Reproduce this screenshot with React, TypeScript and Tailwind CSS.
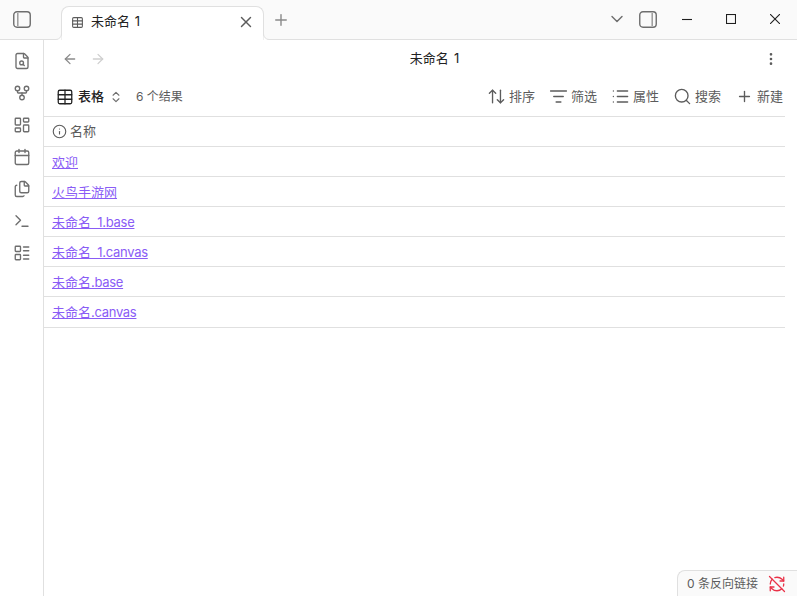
import React from "react";
import { Table, X, Plus, ChevronDown, ArrowLeft, ArrowRight, MoreVertical, ChevronsUpDown, ArrowUpDown, ListFilter, List, Search, Info, GitFork, LayoutDashboard, Calendar, Files, Terminal, FileSearch, LayoutList, RefreshCwOff } from "lucide-react";

const rows: [string, string][] = [
  ["欢迎", ""],
  ["火鸟手游网", ""],
  ["未命名", " 1.base"],
  ["未命名", " 1.canvas"],
  ["未命名", ".base"],
  ["未命名", ".canvas"],
];

const Panel = ({ right }: { right?: boolean }) => (
  <svg width="18" height="17" viewBox="0 0 18 17" fill="none">
    <rect x="0.75" y="0.75" width="16.5" height="15.5" rx="3.2" stroke="#6e6e6e" strokeWidth="1.4" />
    <path d={right ? "M13.2 2v13" : "M4.800 2v13"} stroke="#9a9a9a" strokeWidth="1.500" />
  </svg>
);

const WinMin = () => (
  <svg width="10" height="10" viewBox="0 0 10 10" stroke="#1f1f1f" strokeWidth="1.100" fill="none"><path d="M0 5.500h10" /></svg>
);
const WinMax = () => (
  <svg width="10" height="10" viewBox="0 0 10 10" stroke="#1f1f1f" strokeWidth="1.100" fill="none"><rect x="0.500" y="0.500" width="9" height="9" /></svg>
);
const WinClose = () => (
  <svg width="10" height="10" viewBox="0 0 10 10" stroke="#1f1f1f" strokeWidth="1.100" fill="none"><path d="M0 0l10 10M10 0L0 10" /></svg>
);

const Tool = ({ icon, label, className }: { icon: React.ReactNode; label: string; className: string }) => (
  <div className={`flex items-center ${className}`}>
    {icon}
    <span>{label}</span>
  </div>
);

const SideIcon = ({ children }: { children: React.ReactNode }) => (
  <div className="h-8 flex items-center justify-center text-[#6e6e6e]">{children}</div>
);

export default function App() {
  return (
    <div className="w-[797px] h-[596px] flex flex-col overflow-hidden bg-white text-[13px] font-['Inter','Noto_Sans_CJK_SC',sans-serif] relative">
      {/* title bar */}
      <div className="h-10 shrink-0 flex bg-[#fafafa] border-b border-[#e0e0e0]">
        <div className="w-[44px] flex items-center justify-center pb-[1px]"><Panel /></div>
        <div className="ml-[17px] mt-[6px] w-[203px] h-[34px] relative z-10 flex items-center bg-white border border-b-0 border-[#e0e0e0] rounded-t-[8px] pl-[9px] pr-[8px] pb-[3px]">
          <svg className="absolute left-[-6px] bottom-0" width="6" height="6" viewBox="0 0 6 6"><path d="M0 5.500C3 5.500 5.500 3 5.500 0V6H0Z" fill="#ffffff" /><path d="M0 5.500C3 5.500 5.500 3 5.500 0" fill="none" stroke="#e0e0e0" /></svg>
          <svg className="absolute right-[-6px] bottom-0" width="6" height="6" viewBox="0 0 6 6"><path d="M6 5.500C3 5.500 .5 3 .5 0V6H6Z" fill="#ffffff" /><path d="M6 5.500C3 5.500 .5 3 .5 0" fill="none" stroke="#e0e0e0" /></svg>
          <Table size={13} strokeWidth={2} className="text-[#5c5c5c]" />
          <span className="ml-[7px] text-[#222] flex-1 [word-spacing:1px]">未命名 1</span>
          <X size={18} strokeWidth={1.9} className="text-[#5c5c5c]" />
        </div>
        <div className="ml-[8px] flex items-center"><Plus size={18} strokeWidth={1.9} className="text-[#8a8a8a]" /></div>
        <div className="flex-1" />
        <div className="flex items-center pb-[1px] mr-[12px]"><ChevronDown size={20} strokeWidth={1.7} className="text-[#6e6e6e]" /></div>
        <div className="flex items-center pb-[1px]"><Panel right /></div>
        <div className="w-[44px] ml-[8px] flex items-center justify-center pb-[1px]"><WinMin /></div>
        <div className="w-[44px] flex items-center justify-center pb-[1px]"><WinMax /></div>
        <div className="w-[44px] flex items-center justify-center pb-[1px]"><WinClose /></div>
      </div>
      <div className="flex-1 flex min-h-0">
        {/* left ribbon */}
        <div className="w-[44px] shrink-0 border-r border-[#e0e0e0] flex flex-col pt-[5px]">
          <SideIcon><FileSearch size={18} strokeWidth={1.8} /></SideIcon>
          <SideIcon><GitFork size={18} strokeWidth={1.8} /></SideIcon>
          <SideIcon><LayoutDashboard size={18} strokeWidth={1.8} /></SideIcon>
          <SideIcon><Calendar size={18} strokeWidth={1.8} /></SideIcon>
          <SideIcon><Files size={18} strokeWidth={1.8} /></SideIcon>
          <SideIcon><Terminal size={18} strokeWidth={1.8} /></SideIcon>
          <SideIcon><LayoutList size={18} strokeWidth={1.8} /></SideIcon>
        </div>
        {/* main */}
        <div className="flex-1 min-w-0 flex flex-col">
          <div className="h-[37px] shrink-0 flex items-center pl-[18px] pr-[18px]">
            <ArrowLeft size={16} strokeWidth={1.9} className="text-[#8a8a8a]" />
            <ArrowRight size={16} strokeWidth={1.9} className="ml-[12px] text-[#cfcfcf]" />
            <div className="flex-1 text-center text-[#222] [word-spacing:1.5px]">未命名 1</div>
            <MoreVertical size={16} strokeWidth={2} className="text-[#5c5c5c]" />
          </div>
          <div className="h-[39px] shrink-0 flex items-center pl-[12px] mr-[12px] text-[#5c5c5c]">
            <Table size={18} strokeWidth={1.7} className="text-[#222]" />
            <span className="ml-[4px] text-[#222] font-medium">表格</span>
            <ChevronsUpDown size={14} strokeWidth={1.9} className="ml-[5px] text-[#6e6e6e]" />
            <span className="ml-[13px] text-[12px]">6 个结果</span>
            <div className="flex-1" />
            <Tool className="mr-[14px] gap-[3px]" label="排序" icon={<ArrowUpDown size={19} strokeWidth={1.7} />} />
            <Tool className="mr-[14px] gap-[3px]" label="筛选" icon={<ListFilter size={19} strokeWidth={1.7} />} />
            <Tool className="mr-[14px] gap-[3px]" label="属性" icon={<List size={19} strokeWidth={1.7} />} />
            <Tool className="mr-[15px] gap-[3px]" label="搜索" icon={<Search size={19} strokeWidth={1.7} />} />
            <Tool className="mr-[2px] gap-[4px]" label="新建" icon={<Plus size={17} strokeWidth={1.9} />} />
          </div>
          <div className="mr-[12px] border-t border-[#e0e0e0]">
            <div className="h-[30px] border-b border-[#e0e0e0] flex items-center pl-[8px] text-[#5c5c5c]">
              <Info size={15} strokeWidth={1.8} />
              <span className="ml-[3px]">名称</span>
            </div>
            {rows.map(([c, l]) => (
              <div key={c + l} className="h-[30px] last:h-[31px] border-b border-[#e0e0e0] flex items-center pl-[8px] pt-[2px] last:pt-[1px]">
                <a className="text-[#8a5cf6] underline [word-spacing:3px]">{c}<span className="tracking-[-0.3px]">{l}</span></a>
              </div>
            ))}
          </div>
        </div>
      </div>
      {/* status bar */}
      <div className="absolute right-0 bottom-0 w-[120px] h-[26px] bg-[#fafafa] border-t border-l border-[#e0e0e0] rounded-tl-[8px] flex items-center pl-[9px] gap-[10px] text-[12px] text-[#5c5c5c]">
        <span>0 条反向链接</span>
        <RefreshCwOff size={18} strokeWidth={1.7} className="text-[#e93147]" />
      </div>
    </div>
  );
}
